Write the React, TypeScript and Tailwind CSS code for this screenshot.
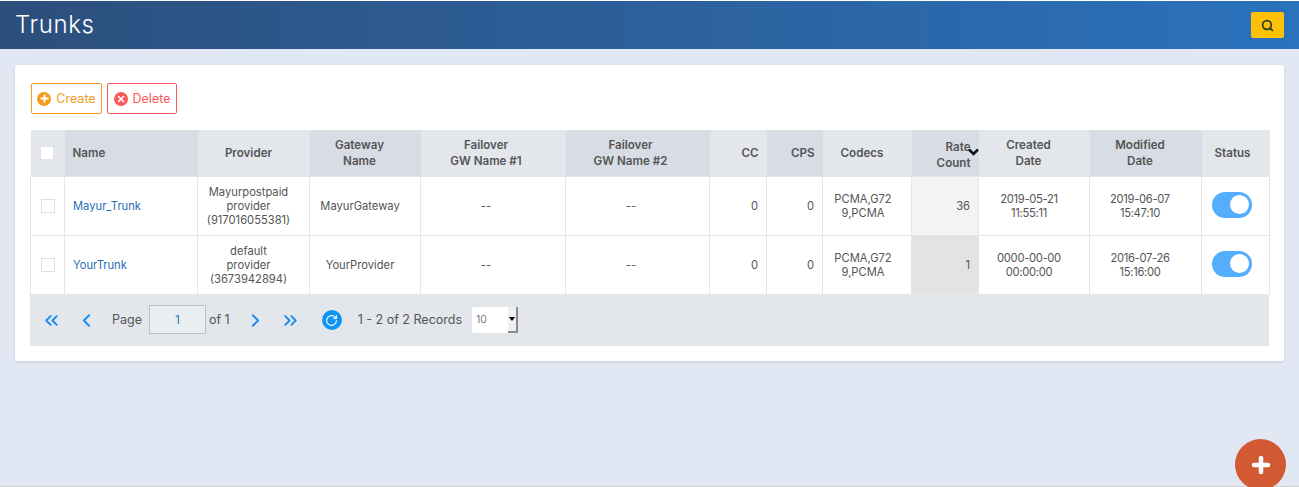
import React from "react";
import { Search, ChevronsLeft, ChevronLeft, ChevronRight, ChevronsRight, RotateCw, Plus, X } from "lucide-react";

const headers: { t: React.ReactNode; w: number; dark?: boolean; cls: string }[] = [
  { t: "", w: 34, cls: "" },
  { t: "Name", w: 133, dark: true, cls: "text-left pl-2" },
  { t: "Provider", w: 112, cls: "text-center pr-[10px]" },
  { t: <>Gateway<br />Name</>, w: 111, dark: true, cls: "text-center pr-[11px]" },
  { t: <>Failover<br />GW Name #1</>, w: 145, cls: "text-center pr-[14px]" },
  { t: <>Failover<br />GW Name #2</>, w: 144, dark: true, cls: "text-center pr-[14px]" },
  { t: "CC", w: 57, cls: "text-right pr-2" },
  { t: "CPS", w: 56, dark: true, cls: "text-right pr-2" },
  { t: "Codecs", w: 89, cls: "text-center pr-[10px]" },
  { t: <>Rate<br />Count</>, w: 67, dark: true, cls: "text-right pr-2 pt-[4px]" },
  { t: <>Created<br />Date</>, w: 111, cls: "text-center pr-[11px]" },
  { t: <>Modified<br />Date</>, w: 112, dark: true, cls: "text-center pr-[11px]" },
  { t: "Status", w: 68, cls: "text-center pr-[6px]" },
];

const rows = [
  { name: "Mayur_Trunk", prov: ["Mayurpostpaid", "provider", "(917016055381)"], gw: "MayurGateway", rate: "36", rateBg: "bg-[#f3f3f3]", c: ["2019-05-21", "11:55:11"], m: ["2019-06-07", "15:47:10"] },
  { name: "YourTrunk", prov: ["default", "provider", "(3673942894)"], gw: "YourProvider", rate: "1", rateBg: "bg-[#e3e3e3]", c: ["0000-00-00", "00:00:00"], m: ["2016-07-26", "15:16:00"] },
];

const td = "border border-[#e6e6e6] align-middle p-0 text-[11.2px] leading-[14px]";
const tg = `${td} text-[#555]`;

function Lines({ l }: { l: string[] }) {
  return <>{l.map((x, i) => <div key={i}>{x}</div>)}</>;
}

export default function App() {
  return (
    <div className="h-[487px] w-[1299px] overflow-hidden relative bg-[#e1e8f3] font-['Inter','Open_Sans',sans-serif]">
      <div className="h-px bg-white" />
      <header className="h-[48px] flex items-center justify-between pl-[15px] pr-[15px] bg-gradient-to-r from-[#2c4f7c] to-[#2a72bd]">
        <h1 className="text-[24px] font-light text-white tracking-[0.6px]">Trunks</h1>
        <button className="w-[33px] h-[26px] bg-[#ffc107] rounded-[2px] flex items-center justify-center">
          <Search size={13} strokeWidth={3.2} className="text-[#263a2a]" />
        </button>
      </header>

      <main className="mx-[15px] mt-[16px] h-[296px] bg-white rounded-[3px] shadow-[0_1px_3px_rgba(0,0,0,0.12)] px-[15px] pt-[18px]">
        <div className="flex gap-[5px] h-[31px] ml-px">
          <button className="w-[71px] border border-[#f39c1f] rounded-[2px] flex items-center justify-center gap-[5px] text-[12.5px] text-[#f39c1f]">
            <span className="w-[14px] h-[14px] rounded-full bg-[#f39c1f] flex items-center justify-center">
              <Plus size={11} strokeWidth={4} className="text-white" />
            </span>
            <span className="pt-[2px]">Create</span>
          </button>
          <button className="w-[70px] border border-[#fb5a5a] rounded-[2px] flex items-center justify-center gap-[5px] text-[12.5px] text-[#fb5a5a]">
            <span className="w-[14px] h-[14px] rounded-full bg-[#fb5a5a] flex items-center justify-center">
              <X size={10} strokeWidth={4} className="text-white" />
            </span>
            <span className="pt-[2px]">Delete</span>
          </button>
        </div>

        <table className="mt-[16px] w-[1239px] table-fixed border-collapse">
          <colgroup>
            {headers.map((h, i) => <col key={i} style={{ width: h.w }} />)}
          </colgroup>
          <thead>
            <tr className="h-[46px]">
              {headers.map((h, i) => (
                <th key={i} className={`${h.dark ? "bg-[#d8dce4]" : "bg-[#e3e6eb]"} ${h.cls} relative p-0 text-[11.6px] leading-[16px] font-semibold text-[#555]`}>
                  {i === 0 && <span className="block w-[14px] h-[14px] ml-[9px] bg-white border border-[#e3e3e3]" />}
                  {h.t}
                  {i === 9 && (
                    <svg viewBox="0 0 12 8" className="absolute right-[-1px] top-[18px] w-[13px] h-[8px]">
                      <path d="M1.5 1.5 L6 6 L10.5 1.5" fill="none" stroke="#111" strokeWidth="2.6" />
                    </svg>
                  )}
                </th>
              ))}
            </tr>
          </thead>
          <tbody>
            {rows.map((r) => (
              <tr key={r.name} className="h-[59px]">
                <td className={tg}><span className="block w-[14px] h-[14px] ml-[10px] border border-[#e0e0e0] bg-white" /></td>
                <td className={`${td} pl-2 text-[#2a6db5]`}>{r.name}</td>
                <td className={`${tg} text-center pr-[10px]`}><Lines l={r.prov} /></td>
                <td className={`${tg} text-center pr-[10px]`}>{r.gw}</td>
                <td className={`${tg} text-center pr-[14px]`}>--</td>
                <td className={`${tg} text-center pr-[13px]`}>--</td>
                <td className={`${tg} text-right pr-2`}>0</td>
                <td className={`${tg} text-right pr-2`}>0</td>
                <td className={`${tg} text-center pr-[8px]`}><Lines l={["PCMA,G72", "9,PCMA"]} /></td>
                <td className={`${tg} ${r.rateBg} text-right pr-2`}>{r.rate}</td>
                <td className={`${tg} text-center pr-[10px] tracking-[-0.3px]`}><Lines l={r.c} /></td>
                <td className={`${tg} text-center pr-[11px] tracking-[-0.3px]`}><Lines l={r.m} /></td>
                <td className={tg}>
                  <div className="ml-[10px] mb-[2px] w-[40px] h-[26px] rounded-full bg-[#54aefc] flex items-center justify-end pr-[3px]">
                    <span className="w-[19px] h-[19px] rounded-full bg-white" />
                  </div>
                </td>
              </tr>
            ))}
          </tbody>
        </table>

        <div className="h-[51px] bg-[#e3e6eb] flex items-center text-[#555] text-[12.5px]">
          <ChevronsLeft size={21} strokeWidth={2.2} className="ml-[11px] text-[#1a8cf0]" />
          <ChevronLeft size={21} strokeWidth={2.2} className="ml-[14px] text-[#1a8cf0]" />
          <span className="ml-[15px]">Page</span>
          <div className="ml-[7px] mb-[2px] w-[57px] h-[29px] border border-[#b7c3cc] bg-[#e9eef1] text-[#2a7fb8] flex items-center justify-center pt-[2px] text-[12px]">1</div>
          <span className="ml-[3px]">of 1</span>
          <ChevronRight size={21} strokeWidth={2.2} className="ml-[15px] text-[#1a8cf0]" />
          <ChevronsRight size={21} strokeWidth={2.2} className="ml-[14px] text-[#1a8cf0]" />
          <span className="ml-[21px] w-[20px] h-[20px] rounded-full bg-[#0f96f5] flex items-center justify-center">
            <RotateCw size={13} strokeWidth={2} className="text-white" />
          </span>
          <span className="ml-[16px]">1 - 2 of 2 Records</span>
          <div className="ml-[10px] w-[46px] h-[26px] bg-white rounded-[2px] flex items-center pl-[4px] text-[10.5px] text-[#777] relative">
            10
            <span className="absolute right-0 top-0 h-[26px] w-[10px] bg-[#efefef] border-r-2 border-b-2 border-[#8a8a8a] flex items-center justify-center">
              <span className="w-0 h-0 border-l-[3px] border-r-[3px] border-t-[4px] border-l-transparent border-r-transparent border-t-black" />
            </span>
          </div>
        </div>
      </main>

      <div className="absolute left-0 right-0 bottom-0 h-px bg-[#cfcfcf]" />
      <button className="absolute left-[1235px] top-[439px] w-[51px] h-[51px] rounded-full bg-[#d15a32] flex items-center justify-center">
        <Plus size={24} strokeWidth={4.5} className="text-white" />
      </button>
    </div>
  );
}
